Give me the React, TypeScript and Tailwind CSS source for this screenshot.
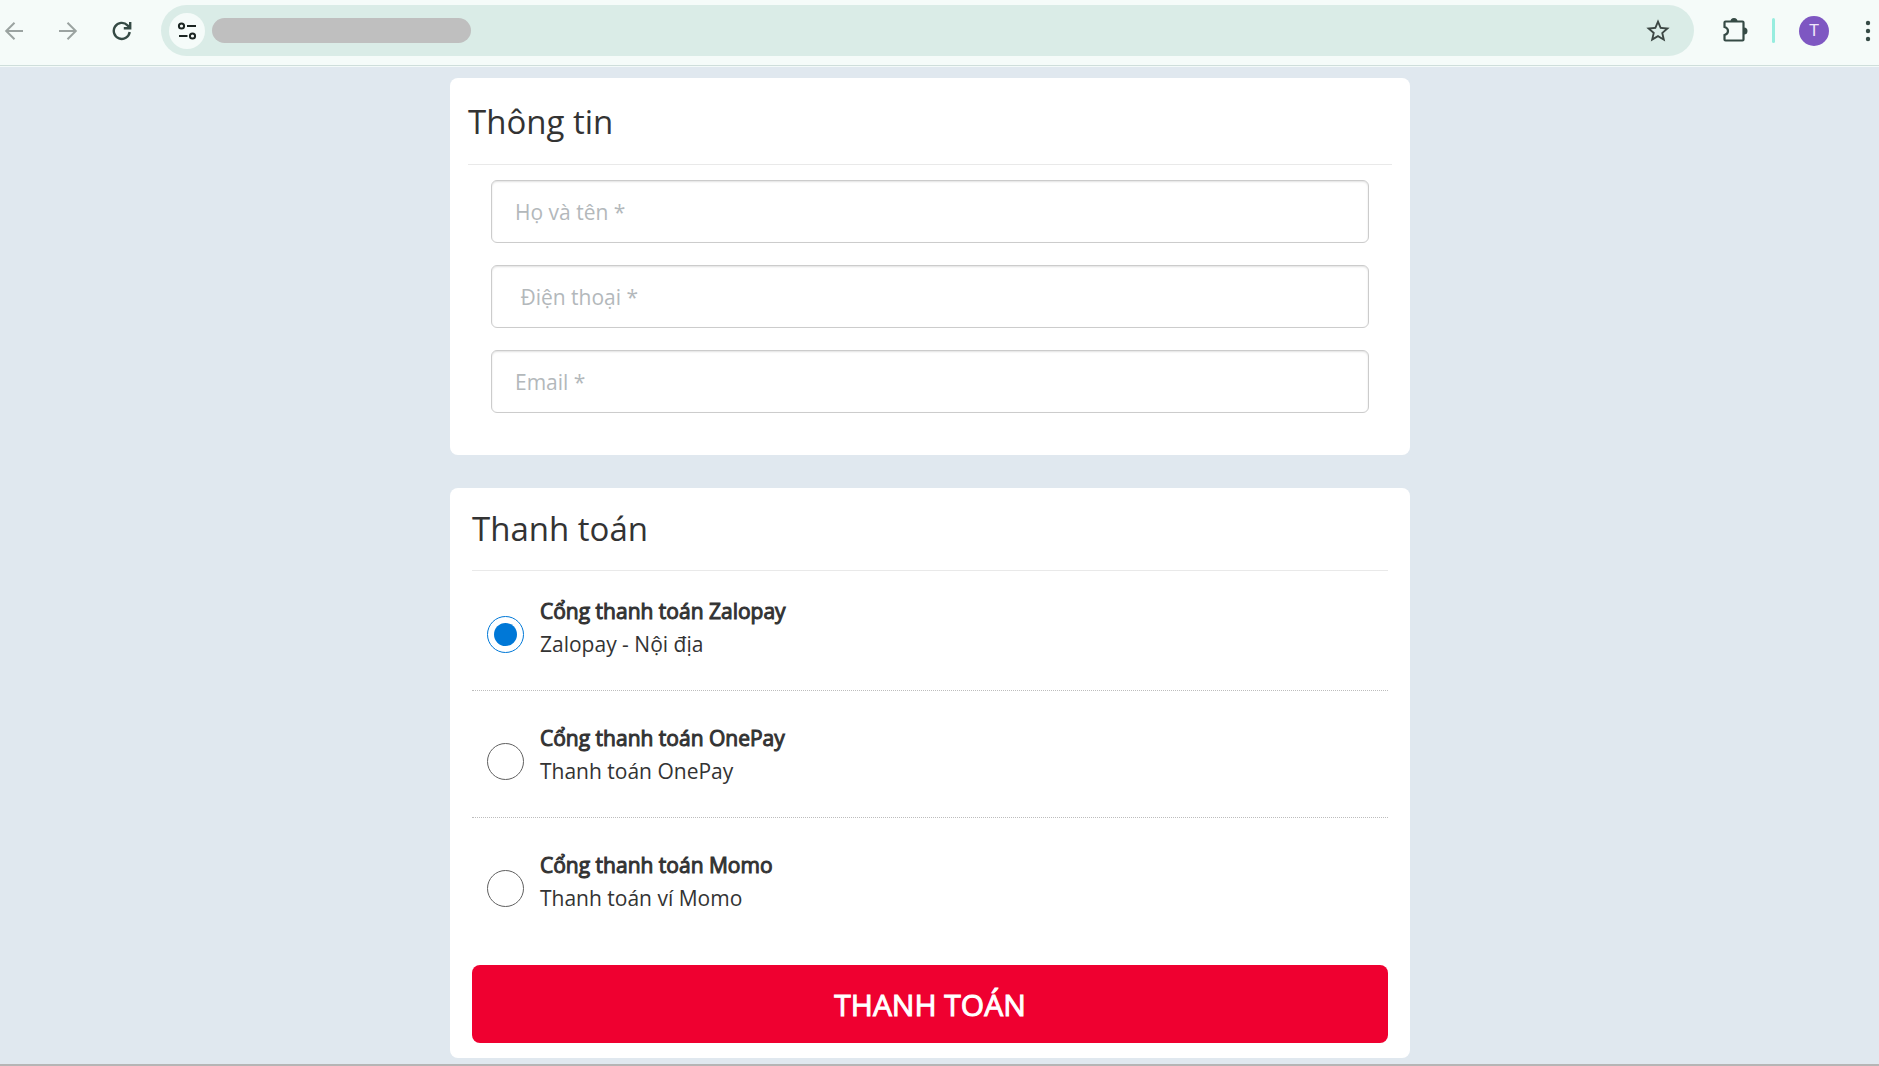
import { useState } from 'react';
import { MdStarBorder } from 'react-icons/md';

type Field = { name: string; type: string; placeholder: string };
type Gateway = { id: string; title: string; desc: string };

const fields: Field[] = [
  { name: 'fullname', type: 'text', placeholder: 'Họ và tên *' },
  { name: 'phone', type: 'tel', placeholder: '\u00a0Điện thoại *' },
  { name: 'email', type: 'email', placeholder: 'Email *' },
];

const gateways: Gateway[] = [
  { id: 'zalopay', title: 'Cổng thanh toán Zalopay', desc: 'Zalopay - Nội địa' },
  { id: 'onepay', title: 'Cổng thanh toán OnePay', desc: 'Thanh toán OnePay' },
  { id: 'momo', title: 'Cổng thanh toán Momo', desc: 'Thanh toán ví Momo' },
];

function BrowserBar() {
  return (
    <header className="flex h-[67px] items-center border-b border-[#f3faf9] bg-[#f5fbf9] pt-[5px] pb-[10px] pr-1 pl-1 shadow-[inset_0_-1px_0_#cfdedb]">
      <button type="button" aria-label="Back" className="text-[#9ba3a1]">
        <svg width="20" height="20" viewBox="0 0 20 20" fill="none" stroke="currentColor" strokeWidth="2">
          <path d="M19 10H2.5M10.5 1.7 2.2 10l8.3 8.3" />
        </svg>
      </button>
      <button type="button" aria-label="Forward" className="ml-[34px] text-[#9ba3a1]">
        <svg width="20" height="20" viewBox="0 0 20 20" fill="none" stroke="currentColor" strokeWidth="2">
          <path d="M1 10h16.5M9.5 1.7 17.8 10l-8.3 8.3" />
        </svg>
      </button>
      <button type="button" aria-label="Reload" className="ml-[34px] text-[#354a45]">
        <svg width="20" height="20" viewBox="0 0 20 20" fill="none" stroke="currentColor" strokeWidth="2.4">
          <path d="M17.7 11A8 8 0 1 1 15.5 4.3L17.8 6.6" />
          <path d="M18.2 1v6.3H11.8" />
        </svg>
      </button>

      <div className="ml-[29px] flex h-[51px] flex-1 items-center rounded-full bg-[#daece7] pr-[22px] pl-2">
        <button
          type="button"
          aria-label="Site information"
          className="flex size-9 items-center justify-center rounded-full bg-[#f5fbf9] text-[#1a2421]"
        >
          <svg width="20" height="20" viewBox="0 0 20 20" fill="none" stroke="currentColor" strokeWidth="2">
            <circle cx="4.5" cy="5" r="2.6" />
            <path d="M10 5h9M2 15h8.5" />
            <circle cx="15.5" cy="15" r="2.6" />
          </svg>
        </button>
        <span className="ml-[7px] h-[25px] w-[259px] rounded-full bg-[#bfbfbf]" />
        <button type="button" aria-label="Bookmark" className="ml-auto text-[#3c4744]">
          <MdStarBorder size={28} />
        </button>
      </div>

      <button type="button" aria-label="Extensions" className="ml-[28px] text-[#354a45]">
        <svg width="26" height="26" viewBox="0 0 26 26" fill="none" stroke="currentColor" strokeWidth="2.2">
          <path d="M3.5 3.5H20.5Q21.5 3.5 21.5 4.5V21.5Q21.5 22.5 20.5 22.5H3.5Q2.5 22.5 2.5 21.500V17Q6 16 6 13T2.5 9V4.5Q2.5 3.5 3.5 3.5Z" />
          <path d="M8.5 3.5a3.500 3.500 0 0 1 7 0ZM22 9.500a3.5 3.5 0 0 1 0 7Z" fill="currentColor" stroke="none" />
        </svg>
      </button>
      <span className="ml-[24px] h-[25px] w-[3px] rounded-full bg-[#97eddf]" />
      <button
        type="button"
        aria-label="Profile"
        className="ml-[24px] flex size-[30px] items-center justify-center rounded-full bg-[#7e57c2] font-[Roboto,sans-serif] text-[17px] text-[#efe6fa]"
      >
        T
      </button>
      <button type="button" aria-label="Menu" className="ml-[32px] text-[#354a45]">
        <svg width="14" height="24" viewBox="0 0 14 24" fill="currentColor">
          <circle cx="7" cy="4" r="2.2" />
          <circle cx="7" cy="12" r="2.2" />
          <circle cx="7" cy="20" r="2.2" />
        </svg>
      </button>
    </header>
  );
}

export default function App() {
  const [gateway, setGateway] = useState('zalopay');

  return (
    <div className="flex min-h-screen flex-col border-b-2 border-[#b5b5b5] bg-[#e0e8ef] font-['Open_Sans','Noto_Sans',sans-serif] text-[#333333]">
      <BrowserBar />
      <form
        onSubmit={(e) => e.preventDefault()}
        className="flex flex-1 flex-col items-center gap-[33px] pt-[11px] pr-[19px] pb-[6px]"
      >
        <section className="w-full max-w-[960px] rounded-lg bg-white px-[18px] pt-5 pb-[42px]">
          <h2 className="border-b border-[#e9e9e9] pb-[18px] text-[33px] leading-[48px]">Thông tin</h2>
          <div className="flex flex-col gap-[22px] px-[23px] pt-[15px]">
            {fields.map((f) => (
              <input
                key={f.name}
                name={f.name}
                type={f.type}
                placeholder={f.placeholder}
                aria-label={f.placeholder.trim()}
                className="h-[63px] w-full rounded-md border border-[#cccccc] bg-white px-[23px] text-[21px] shadow-[inset_0_1px_2px_rgba(0,0,0,0.12)] placeholder:text-[#b3b8bb]"
              />
            ))}
          </div>
        </section>

        <section className="w-full max-w-[960px] rounded-lg bg-white px-[22px] pt-[17px] pb-[15px]">
          <h2 className="border-b border-[#e9e9e9] pb-[17px] text-[33px] leading-[48px]">Thanh toán</h2>
          <div className="pb-[21px]">
            {gateways.map((g) => (
              <label
                key={g.id}
                className="flex items-start gap-4 border-b border-dotted border-[#bdbdbd] pt-[31px] pb-[29px] pl-[15px] first:pt-6 last:border-b-0"
              >
                <input
                  type="radio"
                  name="gateway"
                  value={g.id}
                  checked={gateway === g.id}
                  onChange={() => setGateway(g.id)}
                  className="mt-[21px] size-[37px] shrink-0 appearance-none rounded-full border border-[#606060] bg-white p-[6px] checked:border-[#0078d7] checked:bg-[#0078d7] checked:bg-clip-content"
                />
                <span className="flex flex-col text-[21px] leading-[33px]">
                  <span className="[-webkit-text-stroke:1px_#333333]">{g.title}</span>
                  <span>{g.desc}</span>
                </span>
              </label>
            ))}
          </div>
          <button
            type="submit"
            className="h-[78px] w-full rounded-lg bg-[#ef0030] text-[30px] text-white [-webkit-text-stroke:1px_#ffffff]"
          >
            THANH TOÁN
          </button>
        </section>
      </form>
    </div>
  );
}
